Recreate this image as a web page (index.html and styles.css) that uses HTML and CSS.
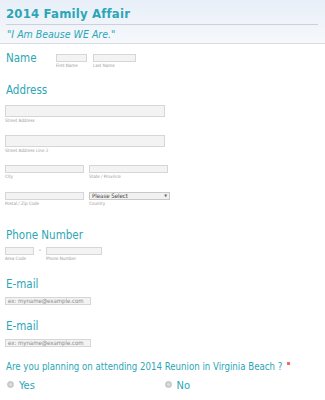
FILE: index.html
```html
<!DOCTYPE html>
<html>
<head>
<meta charset="utf-8">
<link rel="stylesheet" href="styles.css">
</head>
<body>
<div class="header">
  <h1 class="title">2014 Family Affair</h1>
  <div class="subtitle">"I Am Beause WE Are."</div>
</div>
<div class="form">
  <div class="row name-row">
    <div class="label label-inline">Name</div>
    <div class="fields">
      <div class="field"><div class="input in-first"></div><div class="sub">First Name</div></div>
      <div class="field"><div class="input in-last"></div><div class="sub">Last Name</div></div>
    </div>
  </div>

  <div class="section addr">
    <div class="label">Address</div>
    <div class="field block"><div class="input in-wide tall"></div><div class="sub">Street Address</div></div>
    <div class="field block gap2"><div class="input in-wide tall"></div><div class="sub">Street Address Line 2</div></div>
    <div class="pair gap3">
      <div class="field"><div class="input in-half"></div><div class="sub">City</div></div>
      <div class="field"><div class="input in-half"></div><div class="sub">State / Province</div></div>
    </div>
    <div class="pair gap4">
      <div class="field"><div class="input in-half"></div><div class="sub">Postal / Zip Code</div></div>
      <div class="field"><div class="select"><span>Please Select</span><span class="arrow">▼</span></div><div class="sub">Country</div></div>
    </div>
  </div>

  <div class="section phone">
    <div class="label">Phone Number</div>
    <div class="pair phone-pair">
      <div class="field"><div class="input in-area"></div><div class="sub">Area Code</div></div>
      <div class="dash">-</div>
      <div class="field"><div class="input in-phone"></div><div class="sub">Phone Number</div></div>
    </div>
  </div>

  <div class="section email">
    <div class="label">E-mail</div>
    <div class="input in-email">ex: myname@example.com</div>
  </div>

  <div class="section email email2">
    <div class="label">E-mail</div>
    <div class="input in-email">ex: myname@example.com</div>
  </div>

  <div class="section question">
    <div class="label qlabel">Are you planning on attending 2014 Reunion in Virginia Beach ? <span class="req"></span></div>
    <div class="radios">
      <div class="radio-opt"><span class="radio"></span>Yes</div>
      <div class="radio-opt"><span class="radio"></span>No</div>
    </div>
  </div>
</div>
</body>
</html>
```
FILE: styles.css
```css
* { box-sizing: border-box; }
body {
  margin: 0;
  background: #fff;
  font-family: "DejaVu Sans Condensed", "DejaVu Sans", sans-serif;
  font-stretch: condensed;
  color: #2ca6b6;
  width: 325px;
  height: 400px;
  overflow: hidden;
}
.header {
  height: 44px;
  background: linear-gradient(#e8eff8, #f6f8fb);
  border-bottom: 1px solid #d8dde3;
  padding: 6px 7px 0 6px;
}
.title {
  margin: 0;
  font-size: 13px;
  font-weight: bold;
  line-height: 16px;
  letter-spacing: 0.2px;
  padding-bottom: 2px;
  border-bottom: 1px solid #c9d1da;
}
.subtitle {
  font-style: italic;
  font-size: 10.5px;
  line-height: 14px;
  margin-top: 2px;
  padding-left: 1px;
}
.form { padding: 0 5px; }
.label {
  font-size: 11.5px;
  line-height: 14px;
  color: #2ca6b6;
  padding-left: 1px;
}
.name-row {
  display: flex;
  padding-top: 5px;
}
.label-inline { width: 51px; padding-top: 2px; }
.fields { display: flex; gap: 6px; padding-top: 5px; }
.field { display: flex; flex-direction: column; }
.input {
  background: #f3f3f3;
  border: 1px solid #d6d6d6;
  height: 8px;
  font-size: 6px;
  line-height: 6px;
  color: #888;
  padding-left: 2px;
  white-space: nowrap;
  overflow: hidden;
}
.sub {
  font-size: 4.5px;
  line-height: 6px;
  color: #999;
  margin-top: 1px;
  white-space: nowrap;
}
.in-first { width: 31px; }
.in-last { width: 43px; }
.addr { padding-top: 14px; }
.addr .label { margin-bottom: 8px; }
.in-wide { width: 160px; }
.tall { height: 12px; }
.gap2 { margin-top: 11px; }
.pair { display: flex; gap: 5px; align-items: flex-start; }
.gap3 { margin-top: 11px; }
.gap4 { margin-top: 12px; }
.in-half { width: 79px; }
.select {
  width: 81px;
  height: 8px;
  border: 1px solid #c8c8c8;
  background: #f1f1f1;
  font-size: 6px;
  line-height: 6px;
  color: #444;
  display: flex;
  justify-content: space-between;
  padding: 0 2px;
}
.arrow { font-size: 4px; color: #666; line-height: 6px; }
.phone { padding-top: 21px; }
.phone .label { margin-bottom: 5px; }
.phone-pair { gap: 0; }
.in-area { width: 29px; }
.dash { width: 12px; text-align: center; font-size: 7px; line-height: 7px; color: #2ca6b6; }
.in-phone { width: 56px; }
.email { padding-top: 15px; }
.email .label { margin-bottom: 6px; }
.email2 { padding-top: 14px; }
.in-email { width: 86px; }
.question { padding-top: 13px; }
.qlabel { font-size: 9.6px; line-height: 13px; white-space: nowrap; }
.req {
  display: inline-block;
  width: 3px;
  height: 3px;
  background: #f06a6a;
  vertical-align: top;
  margin-top: 2px;
  margin-left: 2px;
}
.radios { display: flex; padding-top: 6px; }
.radio-opt {
  width: 158px;
  display: flex;
  align-items: center;
  font-size: 11px;
  line-height: 14px;
  padding-left: 2px;
}
.radio {
  width: 7px;
  height: 7px;
  border-radius: 50%;
  background: radial-gradient(#e6e6e6, #bcbcbc);
  border: 1px solid #c0c0c0;
  margin-right: 5px;
  margin-top: -4px;
}
```
